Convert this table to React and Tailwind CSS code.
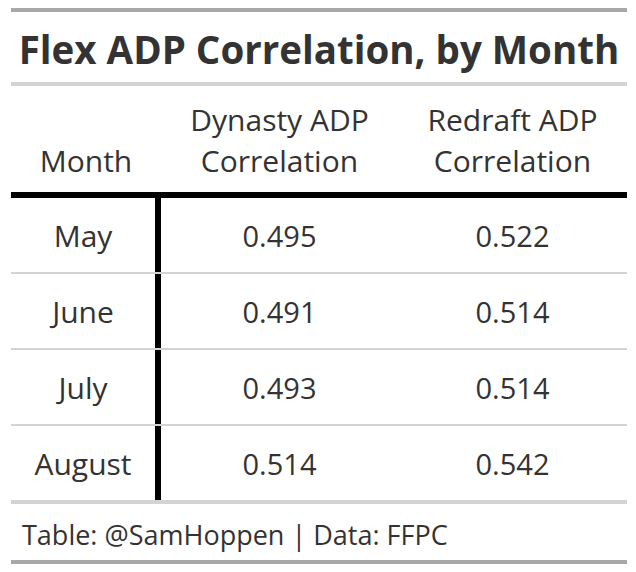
import React from "react";

const rows = [
  { month: "May", dynasty: "0.495", redraft: "0.522" },
  { month: "June", dynasty: "0.491", redraft: "0.514" },
  { month: "July", dynasty: "0.493", redraft: "0.514" },
  { month: "August", dynasty: "0.514", redraft: "0.542" },
];

export default function App() {
  return (
    <div
      className="bg-white w-[636px] h-[572px] pt-[8px] text-[#333333]"
      style={{ fontFamily: '"Open Sans", "Noto Sans", sans-serif' }}
    >
      <div className="ml-[11px] w-[616px]">
        {/* Title */}
        <div className="border-t-[4px] border-b-[4px] border-t-[#a8a8a8] border-b-[#d3d3d3] h-[78px] flex items-center justify-center pt-[3px]">
          <h1 className="text-[38.5px] font-bold leading-[46px] whitespace-nowrap">
            Flex ADP Correlation, by Month
          </h1>
        </div>

        {/* Column labels */}
        <div className="flex items-end h-[112px] border-b-[6px] border-black text-[30px] leading-[41px] pb-[11px] text-center">
          <div className="w-[150px]">Month</div>
          <div className="w-[237px]">
            Dynasty ADP
            <br />
            Correlation
          </div>
          <div className="flex-1">
            Redraft ADP
            <br />
            Correlation
          </div>
        </div>

        {/* Body */}
        <div className="border-b-[4px] border-[#d3d3d3]">
          {rows.map((row, i) => (
            <div
              key={row.month}
              className={
                "flex text-[30px] leading-[41px] text-center " +
                (i < rows.length - 1 ? "border-b-2 border-[#d3d3d3]" : "")
              }
            >
              <div className="w-[150px] h-[74px] flex items-center justify-center border-r-[6px] border-black">
                {row.month}
              </div>
              <div className="w-[237px] flex items-center justify-center text-[29px]">
                {row.dynasty}
              </div>
              <div className="flex-1 flex items-center justify-center text-[29px]">
                {row.redraft}
              </div>
            </div>
          ))}
        </div>

        {/* Source note */}
        <div className="border-b-[4px] border-[#a8a8a8] h-[60px] flex items-center pl-[11px] text-[27px] leading-[36px] pt-[5px]">
          Table: @SamHoppen | Data: FFPC
        </div>
      </div>
    </div>
  );
}
